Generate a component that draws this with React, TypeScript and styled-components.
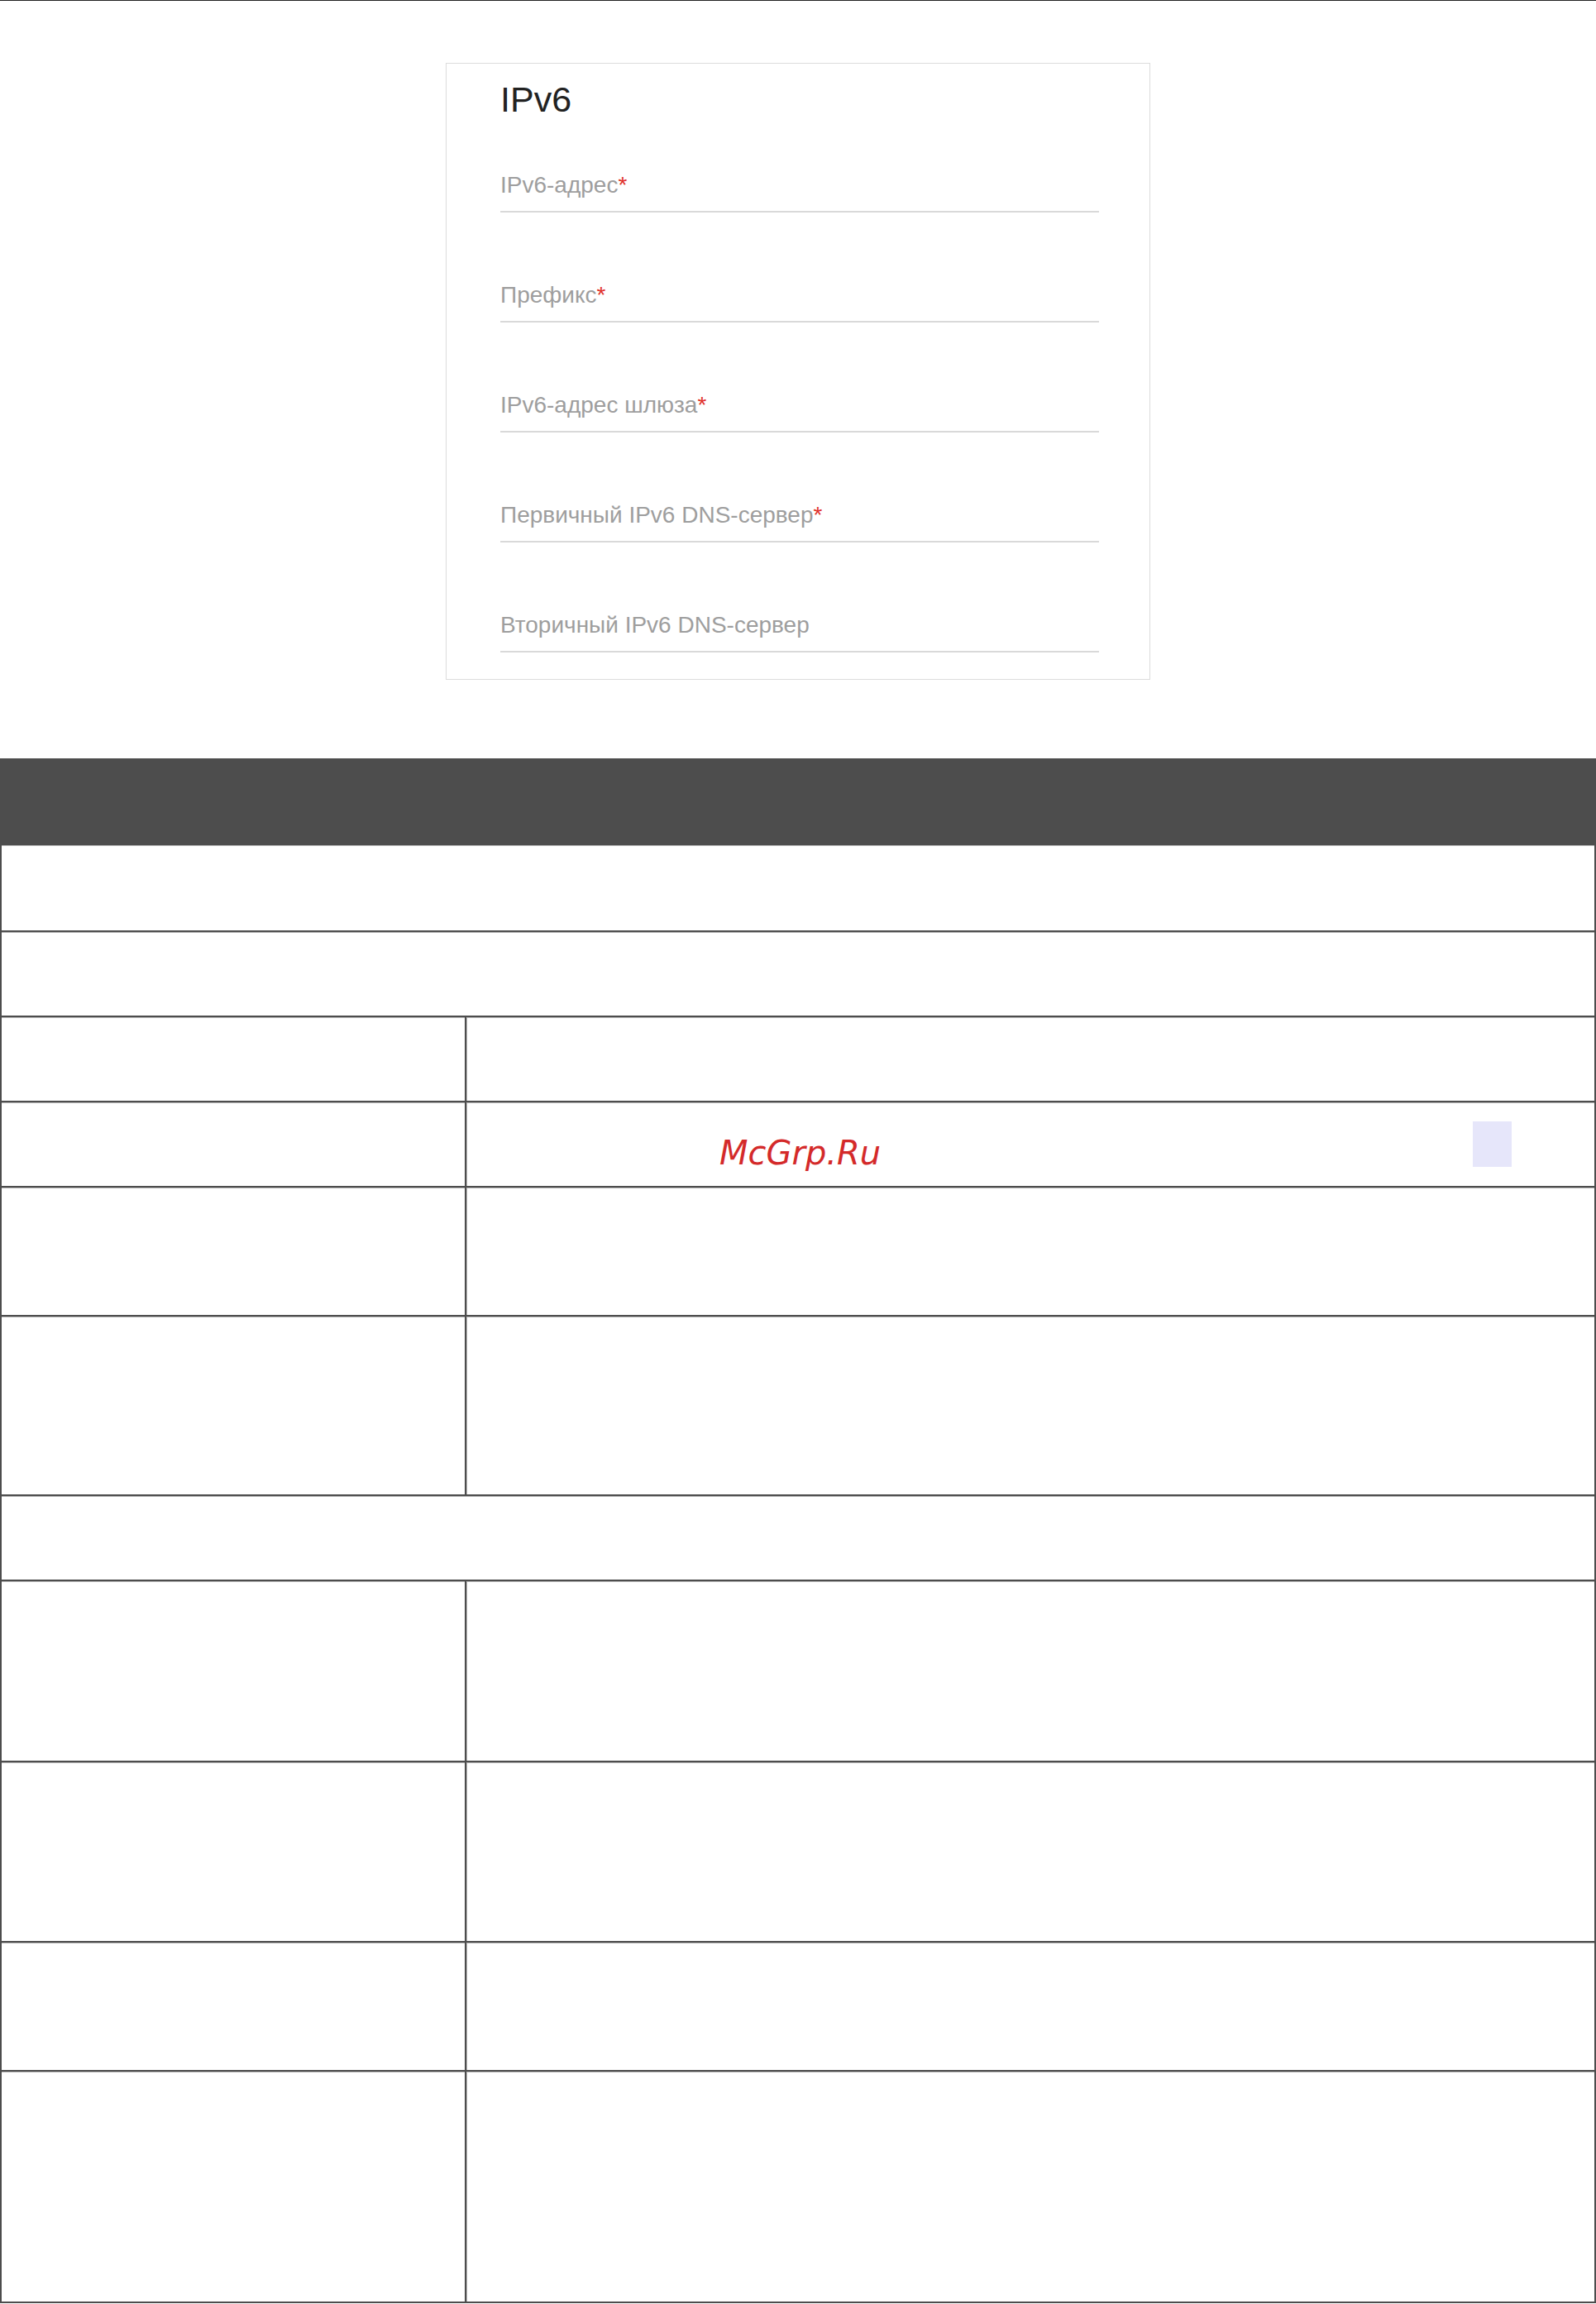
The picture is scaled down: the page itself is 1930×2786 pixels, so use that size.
import React from "react";
import styled, { createGlobalStyle } from "styled-components";

const GlobalStyle = createGlobalStyle`
  html, body {
    margin: 0;
    padding: 0;
    background: #ffffff;
    overflow: hidden;
  }
  body {
    font-family: "Liberation Sans", Arial, sans-serif;
  }
`;

const Page = styled.div`
  width: 1930px;
  display: flex;
  flex-direction: column;
`;

const TopRule = styled.div`
  height: 1px;
  background: #222222;
`;

const Card = styled.section`
  width: 852px;
  box-sizing: border-box;
  margin: 75px auto 0;
  padding: 18px 61px 32px 65px;
  border: 1px solid #dcdcdc;
  background: #ffffff;
`;

const CardTitle = styled.h2`
  margin: 0;
  font-size: 43px;
  line-height: 50px;
  font-weight: 400;
  color: #222222;
`;

const FieldList = styled.div`
  display: flex;
  flex-direction: column;
  gap: 84px;
  margin-top: 63px;
`;

const Field = styled.label`
  display: block;
  padding-bottom: 15px;
  border-bottom: 2px solid #d9d9d9;
  font-size: 28px;
  line-height: 32px;
  color: #9e9e9e;
`;

const Required = styled.span`
  color: #e0312b;
`;

const Table = styled.div`
  margin-top: 95px;
  width: 1930px;
  box-sizing: border-box;
  border-left: 2px solid #4d4d4d;
  border-right: 2px solid #4d4d4d;
  border-bottom: 2px solid #4d4d4d;
  display: flex;
  flex-direction: column;
`;

const HeaderRow = styled.div`
  height: 105px;
  background: #4d4d4d;
`;

const Row = styled.div<{ $h: number; $split?: boolean }>`
  height: ${(p) => p.$h}px;
  box-sizing: border-box;
  display: grid;
  grid-template-columns: ${(p) => (p.$split ? "562px 1fr" : "1fr")};
  & + & {
    border-top: 2px solid #4d4d4d;
  }
`;

const Cell = styled.div<{ $right?: boolean }>`
  box-shadow: inset ${(p) => (p.$right ? "1px" : "0")} 1px 0 #b4b4b4;
`;

const LeftCell = styled(Cell)`
  border-right: 2px solid #4d4d4d;
`;

const StampCell = styled(Cell)`
  display: flex;
  align-items: center;
  padding: 0 100px 0 306px;
`;

const Stamp = styled.span`
  font-family: "DejaVu Sans", sans-serif;
  font-style: italic;
  font-size: 40px;
  line-height: 40px;
  color: #d42a2a;
  margin-top: 20px;
`;

const Marker = styled.div`
  margin-left: auto;
  width: 47px;
  height: 55px;
  background: #e6e6fa;
`;

const fields = [
  { label: "IPv6-адрес", required: true },
  { label: "Префикс", required: true },
  { label: "IPv6-адрес шлюза", required: true },
  { label: "Первичный IPv6 DNS-сервер", required: true },
  { label: "Вторичный IPv6 DNS-сервер", required: false },
];

// row heights include the 2px rule above each row after the first
const rows: { h: number; split: boolean; stamp?: boolean }[] = [
  { h: 103, split: false },
  { h: 103, split: false },
  { h: 103, split: true },
  { h: 103, split: true, stamp: true },
  { h: 156, split: true },
  { h: 217, split: true },
  { h: 103, split: false },
  { h: 219, split: true },
  { h: 218, split: true },
  { h: 156, split: true },
  { h: 280, split: true },
];

export default function App() {
  return (
    <Page>
      <GlobalStyle />
      <TopRule />
      <Card>
        <CardTitle>IPv6</CardTitle>
        <FieldList>
          {fields.map((f) => (
            <Field key={f.label}>
              {f.label}
              {f.required && <Required>*</Required>}
            </Field>
          ))}
        </FieldList>
      </Card>
      <Table>
        <HeaderRow />
        {rows.map((r, i) => (
          <Row key={i} $h={r.h} $split={r.split}>
            {r.split ? (
              <>
                <LeftCell />
                {r.stamp ? (
                  <StampCell $right>
                    <Stamp>McGrp.Ru</Stamp>
                    <Marker />
                  </StampCell>
                ) : (
                  <Cell $right />
                )}
              </>
            ) : (
              <Cell />
            )}
          </Row>
        ))}
      </Table>
    </Page>
  );
}
